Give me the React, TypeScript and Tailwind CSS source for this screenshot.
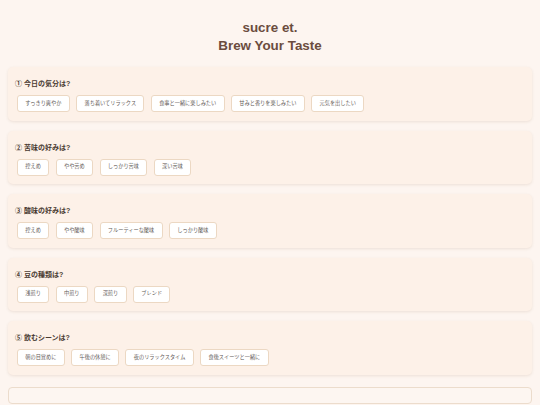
import React from "react";

type Question = {
  title: string;
  options: string[];
};

const questions: Question[] = [
  {
    title: "① 今日の気分は?",
    options: ["すっきり爽やか", "落ち着いてリラックス", "食事と一緒に楽しみたい", "甘みと香りを楽しみたい", "元気を出したい"],
  },
  {
    title: "② 苦味の好みは?",
    options: ["控えめ", "やや苦め", "しっかり苦味", "深い苦味"],
  },
  {
    title: "③ 酸味の好みは?",
    options: ["控えめ", "やや酸味", "フルーティーな酸味", "しっかり酸味"],
  },
  {
    title: "④ 豆の種類は?",
    options: ["浅煎り", "中煎り", "深煎り", "ブレンド"],
  },
  {
    title: "⑤ 飲むシーンは?",
    options: ["朝の目覚めに", "午後の休憩に", "夜のリラックスタイム", "食後スイーツと一緒に"],
  },
];

const QuestionCard = ({ question }: { question: Question }) => {
  return (
    <div className="rounded-[5px] bg-[#fdf1e8] px-[7px] pt-[12px] pb-[8.5px] shadow-[0_1px_3px_rgba(120,80,40,0.12)]">
      <h2 className="text-[7px] leading-[10px] font-bold text-[#4a3b32]">{question.title}</h2>
      <div className="mt-[6px] flex flex-wrap gap-[6.5px] pl-[2px]">
        {question.options.map((option) => (
          <button
            key={option}
            className="h-[17px] rounded-[3px] border border-[#ecd8c3] bg-white px-[7.3px] text-[5.2px] leading-none text-[#5f5a57]"
          >
            {option}
          </button>
        ))}
      </div>
    </div>
  );
};

export default function App() {
  return (
    <div
      className="min-h-screen bg-[#fdf5f0] px-[8px]"
      style={{ fontFamily: '"Liberation Sans", "Noto Sans CJK JP", sans-serif' }}
    >
      <header className="pt-[19px] pb-[12px] text-center text-[13.4px] leading-[18px] font-bold text-[#6b4c3e]">
        <div>sucre et.</div>
        <div>Brew Your Taste</div>
      </header>
      <div className="flex flex-col gap-[10px]">
        {questions.map((q) => (
          <QuestionCard key={q.title} question={q} />
        ))}
        <div className="mt-[2.5px] h-[17px] rounded-[4px] border border-[#ecdccc] bg-[#fdf6f1]" />
      </div>
    </div>
  );
}
